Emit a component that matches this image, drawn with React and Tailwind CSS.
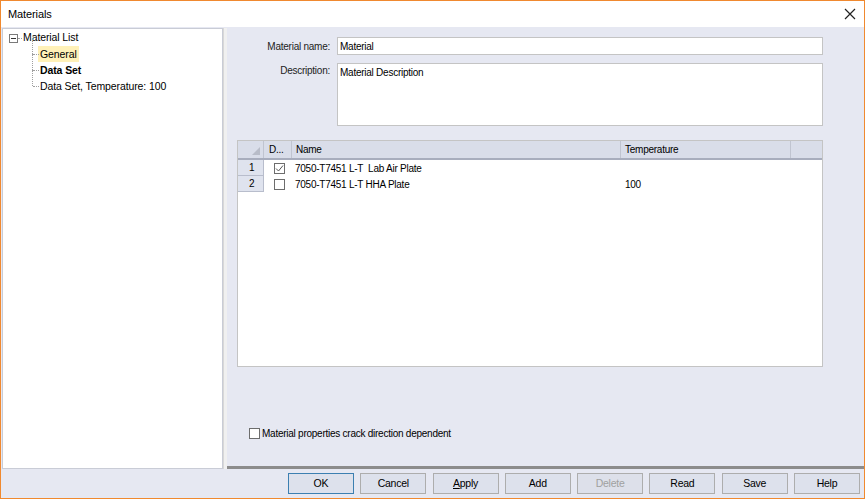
const font = { fontFamily: '"Liberation Sans", Arial, sans-serif' };

function TreeRow({ children, bold, selected, last }) {
  return (
    <div className="relative flex h-4 items-center pl-[35px]">
      <div className={`absolute left-[29px] top-[-8px] w-0 border-l border-dotted border-[#a0a0a0] ${last ? 'h-4' : 'h-6'}`} />
      <div className="absolute left-[30px] top-[8px] w-[6px] border-t border-dotted border-[#a0a0a0]" />
      <span className={`px-[2px] leading-4 ${bold ? 'font-bold' : ''} ${selected ? 'bg-[#fff1b8]' : ''}`}>{children}</span>
    </div>
  );
}

function Btn({ children, primary, disabled }) {
  return (
    <button
      className={`h-[21px] w-[66px] border text-[10.5px] ${primary ? 'border-[#3c7fb1]' : 'border-[#adadad]'} ${disabled ? 'bg-[#dde0ea] text-[#a0a0a0]' : 'bg-[#dde1ec] text-black'}`}
    >
      {children}
    </button>
  );
}

function Check({ checked }) {
  return (
    <div className="flex h-[11px] w-[11px] items-center justify-center border border-[#6d6d6d] bg-white">
      {checked && (
        <svg width="9" height="9" viewBox="0 0 9 9">
          <path d="M1 4.5 L3.5 7 L8 1.5" fill="none" stroke="#555" strokeWidth="1" />
        </svg>
      )}
    </div>
  );
}

export default function App() {
  const rows = [
    { n: 1, checked: true, name: '7050-T7451 L-T  Lab Air Plate', temp: '' },
    { n: 2, checked: false, name: '7050-T7451 L-T HHA Plate', temp: '100' },
  ];
  return (
    <div style={font} className="flex h-[499px] w-[865px] flex-col border border-[#f0892f] bg-[#e6e8f2] text-[10px] tracking-[-0.25px] text-black">
      {/* Title bar */}
      <div className="flex h-[26px] items-center justify-between bg-white pl-[7px] pr-[8px]">
        <span className="text-[11px] tracking-[-0.1px]">Materials</span>
        <svg width="12" height="12" viewBox="0 0 12 12">
          <path d="M1 1 L11 11 M11 1 L1 11" stroke="#222" strokeWidth="1.2" />
        </svg>
      </div>

      {/* Body */}
      <div className="flex min-h-0 flex-1">
        {/* Tree */}
        <div className="ml-[1px] mt-[1px] h-[441px] w-[221px] border border-[#c9ccd6] bg-white pt-[1px] text-[10.5px] tracking-[-0.1px]">
          <div className="flex h-4 items-center">
            <div className="ml-[6px] flex h-[9px] w-[9px] items-center justify-center border border-[#7a7a7a] bg-white">
              <div className="h-px w-[5px] bg-[#333]" />
            </div>
            <div className="w-[4px] border-t border-dotted border-[#a0a0a0]" />
            <span className="pl-[1px]">Material List</span>
          </div>
          <TreeRow selected>General</TreeRow>
          <TreeRow bold>Data Set</TreeRow>
          <TreeRow last>Data Set, Temperature: 100</TreeRow>
        </div>

        {/* Splitter */}
        <div className="mt-[1px] h-[441px] w-[4px] border-l border-[#d8d8d8] bg-[#f0f0f0]" />

        {/* Right panel */}
        <div className="flex h-[442px] flex-1 flex-col border-b-[3px] border-[#8c8c8c] pl-[10px] pr-[41px] pt-[10px]">
          <div className="flex items-center">
            <span className="w-[100px] pr-[7px] text-right text-[#222]">Material name:</span>
            <div className="flex h-[18px] flex-1 items-center border border-[#c4c4c4] bg-white pl-[2px]">Material</div>
          </div>
          <div className="mt-[8px] flex items-start">
            <span className="w-[100px] pr-[7px] text-right text-[#222]">Description:</span>
            <div className="h-[63px] flex-1 border border-[#c4c4c4] bg-white pl-[2px] pt-[1px]">Material Description</div>
          </div>

          {/* Grid */}
          <div className="mt-[14px] h-[227px] border border-[#c4c4c4] bg-white">
            <div className="flex h-[19px] border-b-2 border-[#a8adbd] bg-[#d9dde9]">
              <div className="flex w-[26px] items-end justify-end border-r border-[#c0c4d0] pb-[3px] pr-[3px]">
                <svg width="8" height="8" viewBox="0 0 8 8">
                  <path d="M8 0 L8 8 L0 8 Z" fill="#b8bcc8" />
                </svg>
              </div>
              <div className="flex w-[28px] items-center border-r border-[#c0c4d0] pl-[5px]">D...</div>
              <div className="flex w-[329px] items-center border-r border-[#c0c4d0] pl-[4px]">Name</div>
              <div className="flex w-[170px] items-center border-r border-[#c0c4d0] pl-[4px]">Temperature</div>
              <div className="flex-1" />
            </div>
            {rows.map((r) => (
              <div key={r.n} className="flex h-4">
                <div className="flex w-[26px] items-center border-r border-b border-[#b8bdcc] bg-[#dfe3ee] pl-[11px]">{r.n}</div>
                <div className="flex w-[28px] items-center pl-[10px]">
                  <Check checked={r.checked} />
                </div>
                <div className="flex w-[329px] items-center whitespace-pre pl-[3px]">{r.name}</div>
                <div className="flex w-[170px] items-center pl-[4px]">{r.temp}</div>
              </div>
            ))}
          </div>

          <div className="ml-[12px] mt-[59px] flex items-center gap-[2px]">
            <Check />
            <span>Material properties crack direction dependent</span>
          </div>
        </div>
      </div>

      {/* Buttons */}
      <div className="flex h-[30px] items-start justify-end gap-[6.3px] pr-[4px] pt-[5px]">
        <Btn primary>OK</Btn>
        <Btn>Cancel</Btn>
        <Btn>
          <span className="underline">A</span>pply
        </Btn>
        <Btn>Add</Btn>
        <Btn disabled>Delete</Btn>
        <Btn>Read</Btn>
        <Btn>Save</Btn>
        <Btn>Help</Btn>
      </div>
    </div>
  );
}
